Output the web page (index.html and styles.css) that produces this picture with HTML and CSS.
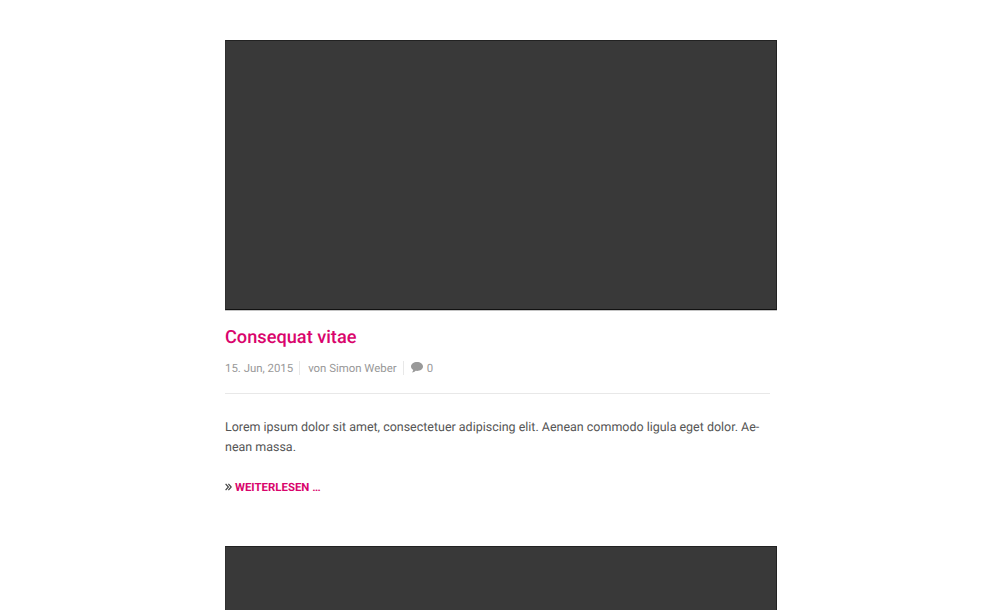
FILE: index.html
```html
<!DOCTYPE html>
<html lang="de">
<head>
<meta charset="utf-8">
<title>Blog</title>
<link rel="stylesheet" href="styles.css">
</head>
<body>
<main class="posts">
  <article class="post">
    <div class="thumb"></div>
    <h2 class="title">Consequat vitae</h2>
    <div class="meta">
      <span class="date">15. Jun, 2015</span>
      <span class="author">von Simon Weber</span>
      <span class="comments"><svg class="bubble" viewBox="0 0 12 11"><path d="M6 0C2.700 0 0 1.900 0 4.500c0 1.500.9 2.700 2.300 3.500-.2 1-.7 1.800-1.400 2.600 1.500-.1 2.800-.8 3.700-1.800.5.1.9.1 1.400.1 3.300 0 6-1.900 6-4.400S9.300 0 6 0z"/></svg>0</span>
    </div>
    <p class="excerpt">Lorem ipsum dolor sit amet, consectetuer adipiscing elit. Aenean commodo ligula eget dolor. Ae-<br>nean massa.</p>
    <a class="more"><svg class="chevrons" viewBox="0 0 7 8"><path d="M.6.8 3.400 4 .6 7.200M3.400.8 6.200 4 3.400 7.200"/></svg>WEITERLESEN …</a>
  </article>
  <article class="post post-cut">
    <div class="thumb thumb-cut"></div>
  </article>
</main>
</body>
</html>
```
FILE: styles.css
```css
body { margin: 0; background: #fff; font-family: Roboto, sans-serif; text-rendering: geometricPrecision; }
.posts { width: 552px; margin-left: 225px; padding-top: 40px; }
.post { height: 506px; }
.post-cut { height: 64px; }
.thumb { height: 270px; background: #393939; box-sizing: border-box; border: 1px solid #222; border-left-color: #303030; border-bottom-color: #111; box-shadow: 0 1px 0 #c4c4c4; }
.thumb-cut { height: 64px; border-bottom: 0; box-shadow: none; }
.title { margin: 15px 0 0; font-size: 18.2px; line-height: 26px; font-weight: 500; color: #d9046c; }
.meta { display: flex; align-items: center; width: 545px; height: 43px; padding-bottom: 9px; border-bottom: 1px solid #e8e8e8; box-sizing: border-box; font-size: 11.4px; color: #999; }
.date, .author { padding-right: 6px; margin-right: 8px; border-right: 1px solid #e8e8e8; }
.author { margin-right: 7px; }
.comments { display: flex; align-items: center; }
.bubble { width: 12px; height: 11px; margin-right: 4px; fill: #999; }
.excerpt { margin: 24px 0 0; font-size: 12.48px; line-height: 20px; color: #555; white-space: nowrap; }
.more { display: flex; align-items: center; margin-top: 19px; font-size: 11.4px; line-height: 20px; font-weight: 700; color: #d9046c; }
.chevrons { width: 7px; height: 8px; margin-right: 3px; fill: none; stroke: #444; stroke-width: 1.2; }
```
